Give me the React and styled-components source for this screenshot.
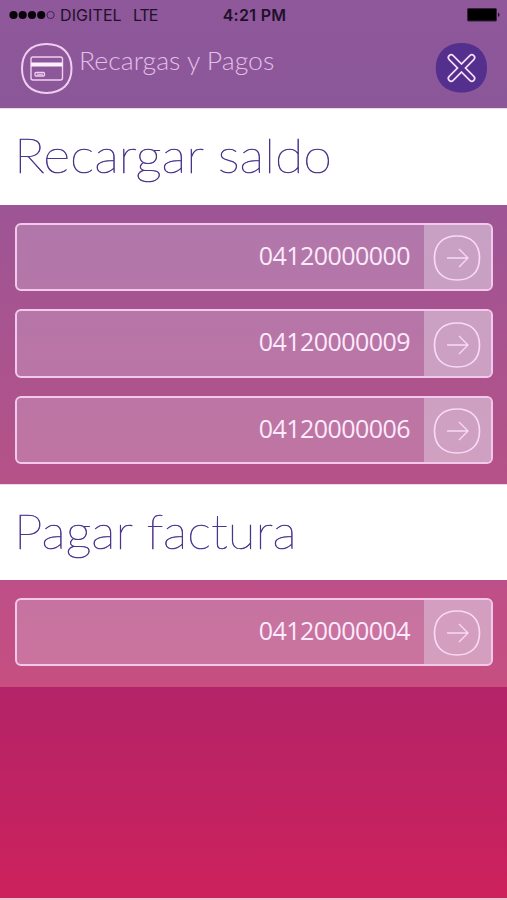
import React from 'react';
import styled, { createGlobalStyle } from 'styled-components';

const GlobalStyle = createGlobalStyle`
    * {
        box-sizing: border-box;
    }
    body {
        margin: 0;
        background: #fff;
    }
`

const Screen = styled.div`
    height: 900px;
    display: flex;
    flex-direction: column;
    overflow: hidden;
    font-family: 'Open Sans', 'Noto Sans', sans-serif;
    border-bottom: 2px solid #f3c3d4;
    background: linear-gradient(#5f2a82 0px, #b32468 687px, #cd215c 898px);
`

const Header = styled.header`
    height: 108px;
    flex: none;
    background: linear-gradient(#8e589a, #8c5799);
`

const StatusBar = styled.div`
    height: 30px;
    display: grid;
    grid-template-columns: 1fr auto 1fr;
    align-items: center;
    padding: 0 7px 0 9px;
    color: #21102a;
    font-family: Inter, 'Liberation Sans', sans-serif;
    font-size: 16px;
`

const Carrier = styled.div`
    display: flex;
    align-items: center;
`

const Signal = styled.svg`
    width: 47px;
    height: 10px;
    margin-right: 4px;
`

const CarrierName = styled.span`
    width: ${props => props.$width}px;
    margin-right: 12px;
    letter-spacing: ${props => props.$spacing}px;
    white-space: nowrap;
`

const Clock = styled.span`
    font-weight: 600;
    letter-spacing: 0.3px;
`

const Battery = styled.svg`
    justify-self: end;
    width: 33px;
    height: 14px;
`

const TitleBar = styled.div`
    display: flex;
    align-items: flex-start;
    padding: 12px 19px 0 20px;
`

const CardIcon = styled.svg`
    width: 53px;
    height: 53px;
    flex: none;
`

const Title = styled.h1`
    flex: 1;
    margin: 4px 0 0 6px;
    color: #e4bde8;
    font-family: Lato, sans-serif;
    font-size: 25px;
    font-weight: 300;
    line-height: 28px;
`

const CloseButton = styled.button`
    width: 53px;
    height: 53px;
    padding: 0;
    border: 0;
    background: none;
`

const SectionTitle = styled.h2`
    height: ${props => props.$height}px;
    flex: none;
    margin: 0;
    padding: 15px 16px 0 14px;
    border-top: 1px solid #ead9ec;
    background: #fff;
    color: #4b348c;
    font-family: Lato, sans-serif;
    font-size: 48px;
    font-weight: 100;
    line-height: 62px;
    -webkit-text-stroke: 0.6px #4b348c;
`

// widens the letters themselves, keeps the left edge in place
const Wide = styled.span`
    display: inline-block;
    transform: scaleX(${props => props.$scale});
    transform-origin: left center;
    white-space: nowrap;
`

const Panel = styled.section`
    height: ${props => props.$height}px;
    flex: none;
    display: flex;
    flex-direction: column;
    gap: 18px;
    padding: 18px 14px 0 15px;
    background: linear-gradient(${props => props.$from}, ${props => props.$to});
`

const PhoneRow = styled.div`
    height: 68.4px;
    display: flex;
    overflow: hidden;
    border: 2px solid #f3c8ed;
    border-radius: 6px;
    background: rgba(215, 185, 215, 0.34);
`

const PhoneNumber = styled.div`
    flex: 1;
    padding-right: 14px;
    color: #fdeafc;
    font-size: 25px;
    letter-spacing: -0.55px;
    line-height: 60px;
    text-align: right;
`

const GoButton = styled.button`
    width: 67px;
    padding: 2px 0 0;
    border: 0;
    background: rgba(229, 220, 233, 0.42);
`

const ArrowIcon = styled.svg`
    display: block;
    width: 48px;
    height: 48px;
    margin: 0 0 0 9px;
`

const recargas = ['04120000000', '04120000009', '04120000006']
const facturas = ['04120000004']

const PhoneItem = ({ number }) => {
    return (
        <PhoneRow>
            <PhoneNumber>{number}</PhoneNumber>
            <GoButton>
                <ArrowIcon viewBox="0 0 48 48" fill="none" stroke="#f9d9f6">
                    <path d="M24 2C38 2 46.5 10 46.5 24S38 46 24 46 1.5 38 1.5 24 10 2 24 2Z" strokeWidth="1.7" />
                    <path d="M14 24H34.5M26 15L35 24L26 33" strokeWidth="1.3" />
                </ArrowIcon>
            </GoButton>
        </PhoneRow>
    )
}

const App = () => {
    return (
        <>
            <GlobalStyle />
            <Screen>
                <Header>
                    <StatusBar>
                        <Carrier>
                            <Signal viewBox="0 0 47 10">
                                {[4.5, 13.7, 23, 32.2].map(x => <circle key={x} cx={x} cy="5" r="4.1" fill="#09040b" />)}
                                <circle cx="41.6" cy="5" r="3.6" fill="none" stroke="#442452" />
                            </Signal>
                            <CarrierName $width={61} $spacing={0.1}>DIGITEL</CarrierName>
                            <CarrierName $width={24} $spacing={-1}>LTE</CarrierName>
                        </Carrier>
                        <Clock>4:21 PM</Clock>
                        <Battery viewBox="0 0 33 14">
                            <rect x="0.5" y="0.5" width="29" height="12.5" rx="1" fill="#000" stroke="#39203f" />
                            <path d="M31 4.5C33 5.5 33 8 31 9Z" fill="#1d0e21" />
                        </Battery>
                    </StatusBar>
                    <TitleBar>
                        <CardIcon viewBox="0 0 53 53" fill="none" stroke="#f0cef1">
                            <path d="M26.5 2C42 2 51.5 11 51.5 26.5S42 51 26.5 51 2 42 2 26.5 11 2 26.5 2Z" strokeWidth="2" />
                            <rect x="11" y="15" width="31.5" height="23" rx="2" strokeWidth="1.4" />
                            <path d="M11 22.5H42.5" strokeWidth="4" stroke="#fff0ff" />
                            <rect x="15" y="30.5" width="9.5" height="3.5" rx="1" strokeWidth="1.3" />
                            <path d="M17 32.3H23" strokeWidth="1" />
                        </CardIcon>
                        <Title><Wide $scale={1.065}>Recargas y Pagos</Wide></Title>
                        <CloseButton>
                            <svg width="53" height="53" viewBox="0 0 53 53">
                                <path d="M26.5 1C42 1 52 11 52 26S42 50.5 26.5 50.5 .8 41 .8 26 11 1 26.5 1Z" fill="#552f8e" />
                                <g strokeLinecap="round" fill="none">
                                    <path d="M16.2 15.7L36.8 36.3M36.8 15.7L16.2 36.3" stroke="#f6defa" strokeWidth="7.3" />
                                    <path d="M16.2 15.7L36.8 36.3M36.8 15.7L16.2 36.3" stroke="#552f8e" strokeWidth="4" />
                                </g>
                            </svg>
                        </CloseButton>
                    </TitleBar>
                </Header>
                <SectionTitle $height={97}><Wide $scale={1.084}>Recargar saldo</Wide></SectionTitle>
                <Panel $height={279} $from="#9d5595" $to="#b65288">
                    {recargas.map(number => <PhoneItem key={number} number={number} />)}
                </Panel>
                <SectionTitle $height={96}><Wide $scale={1.063}>Pagar factura</Wide></SectionTitle>
                <Panel $height={107} $from="#bd4f88" $to="#c64f80">
                    {facturas.map(number => <PhoneItem key={number} number={number} />)}
                </Panel>
            </Screen>
        </>
    )
}

export default App;
